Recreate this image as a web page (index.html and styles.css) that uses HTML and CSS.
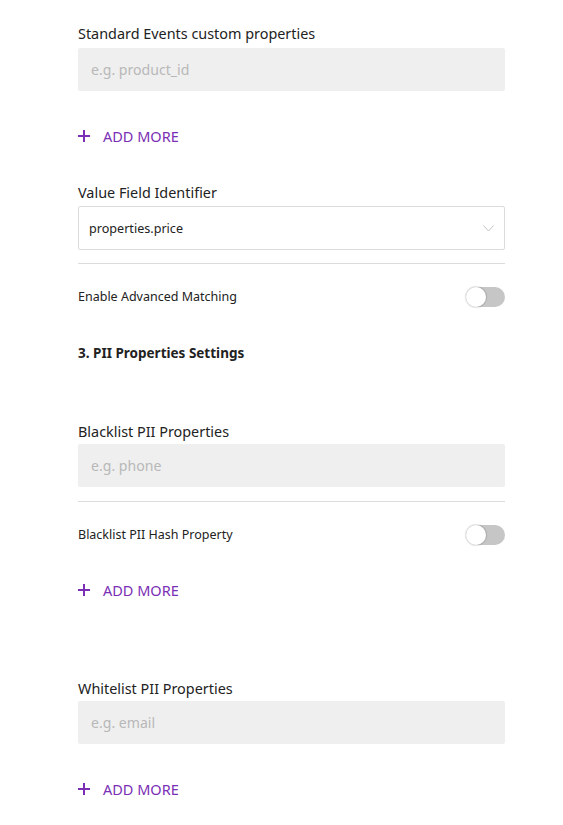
FILE: index.html
```html
<!DOCTYPE html>
<html>
<head>
<meta charset="utf-8">
<link rel="stylesheet" href="styles.css">
</head>
<body>
<div class="form">
  <div class="field f1">
    <div class="label">Standard Events custom properties</div>
    <div class="input">e.g. product_id</div>
  </div>
  <div class="add add1"><span class="plus"></span><span>ADD MORE</span></div>

  <div class="field f2">
    <div class="label">Value Field Identifier</div>
    <div class="select"><span>properties.price</span>
      <svg class="chev" width="11" height="7" viewBox="0 0 11 7"><path d="M0.5 0.5 L5.5 6 L10.5 0.5" fill="none" stroke="#c4c4c4" stroke-width="1"/></svg>
    </div>
  </div>
  <div class="divider d1"></div>
  <div class="toggle-row t1">
    <span class="small">Enable Advanced Matching</span>
    <span class="toggle"><span class="knob"></span></span>
  </div>

  <div class="heading">3. PII Properties Settings</div>

  <div class="field f3">
    <div class="label">Blacklist PII Properties</div>
    <div class="input">e.g. phone</div>
  </div>
  <div class="divider d2"></div>
  <div class="toggle-row t2">
    <span class="small">Blacklist PII Hash Property</span>
    <span class="toggle"><span class="knob"></span></span>
  </div>
  <div class="add add2"><span class="plus"></span><span>ADD MORE</span></div>

  <div class="field f4">
    <div class="label">Whitelist PII Properties</div>
    <div class="input">e.g. email</div>
  </div>
  <div class="add add3"><span class="plus"></span><span>ADD MORE</span></div>
</div>
</body>
</html>
```
FILE: styles.css
```css
html, body { margin: 0; padding: 0; background: #fff; }
body {
  font-family: "Noto Sans", "Open Sans", sans-serif;
  color: #222;
}
.form {
  width: 427px;
  margin-left: 78px;
  padding-top: 23px;
  display: flex;
  flex-direction: column;
}
.label {
  font-size: 14.4px;
  padding-top: 2px;
  line-height: 18px;
  color: #222;
}
.input {
  margin-top: 5px;
  height: 43px;
  background: #efefef;
  border-radius: 2px;
  box-sizing: border-box;
  padding-left: 13px;
  display: flex;
  align-items: center;
  font-size: 14.1px;
  color: #b8b8b8;
}
.select {
  margin-top: 4px;
  height: 44px;
  box-sizing: border-box;
  border: 1px solid #dcdcdc;
  border-radius: 2px;
  display: flex;
  align-items: center;
  justify-content: space-between;
  padding: 0 10px 0 10px;
  font-size: 12.6px;
  color: #222;
}
.add {
  display: flex;
  align-items: center;
  height: 20px;
  font-size: 14.5px;
  color: #7a2fb5;
  gap: 13px;
}
.plus {
  position: relative;
  width: 12px;
  height: 12px;
  display: inline-block;
}
.plus::before, .plus::after {
  content: "";
  position: absolute;
  background: #7a2fb5;
}
.plus::before { left: 0; right: 0; top: 5px; height: 2px; }
.plus::after { top: 0; bottom: 0; left: 5px; width: 2px; }
.add1 { margin-top: 35px; }
.f2 { margin-top: 36px; }
.divider { height: 1px; background: #dcdcdc; }
.d1 { margin-top: 13px; }
.toggle-row {
  display: flex;
  align-items: center;
  justify-content: space-between;
  height: 20px;
}
.t1 { margin-top: 23px; }
.small { font-size: 12.5px; padding-bottom: 2px; }
.toggle {
  position: relative;
  width: 39px;
  height: 20px;
  border-radius: 10px;
  background: #c6c6c6;
}
.knob {
  position: absolute;
  left: 0;
  top: 0;
  width: 20px;
  height: 20px;
  box-sizing: border-box;
  border-radius: 50%;
  background: #fff;
  box-shadow: 0 0 1px 1px rgba(0,0,0,0.12);
}
.heading {
  margin-top: 36px;
  font-size: 13.5px;
  font-weight: 700;
  line-height: 20px;
}
.f3 { margin-top: 58px; }
.f3 .input, .f4 .input { margin-top: 3px; }
.d2 { margin-top: 14px; }
.t2 { margin-top: 23px; }
.add2 { margin-top: 35px; }
.f4 { margin-top: 78px; }
.add3 { margin-top: 35px; }
```
